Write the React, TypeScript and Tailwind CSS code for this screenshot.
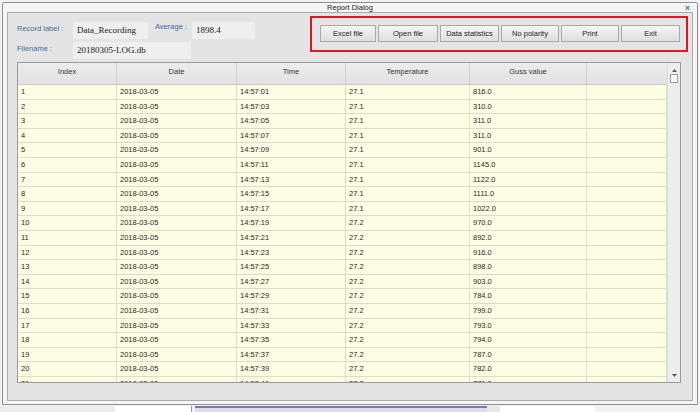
import React from 'react';

const GUSS = [
  '816.0', '310.0', '311.0', '311.0', '901.0', '1145.0', '1122.0', '1111.0', '1022.0', '970.0', '892.0',
  '916.0', '898.0', '903.0', '784.0', '799.0', '793.0', '794.0', '787.0', '782.0', '771.0',
];

const ROWS = GUSS.map((g, i) => {
  const sec = String(1 + i * 2).padStart(2, '0');
  return {
    index: String(i + 1),
    date: '2018-03-05',
    time: `14:57:${sec}`,
    temp: i < 9 ? '27.1' : '27.2',
    guss: g,
  };
});

const COLS = 'grid grid-cols-[99px_120px_109px_124px_117px_1fr]';

const BUTTONS = [
  { label: 'Excel file', w: 'w-[56px]' },
  { label: 'Open file', w: 'w-[60px]' },
  { label: 'Data statistics', w: 'w-[59px]' },
  { label: 'No polarity', w: 'w-[58px]' },
  { label: 'Print', w: 'w-[58px]' },
  { label: 'Exit', w: 'w-[59px]' },
];

function Field({ value, width }: { value: string; width: string }) {
  return (
    <div
      className={`${width} flex h-[17px] items-center bg-[#efefef] pl-[4px] font-['Liberation_Serif',serif] text-[9px] text-[#1a1a1a]`}
    >
      {value}
    </div>
  );
}

function Label({ text, width }: { text: string; width: string }) {
  return <div className={`${width} pt-[3px] text-[7.5px] leading-none text-[#3f6c9f]`}>{text}</div>;
}

function Scrollbar() {
  return (
    <div className="relative flex w-[13px] flex-col items-center border-l border-[#dcdcdc] bg-[#ededed]">
      <svg width="5" height="3" viewBox="0 0 5 3" className="mt-[6px]">
        <path d="M0 3 L2.5 0 L5 3 Z" fill="#555" />
      </svg>
      <div className="mt-[2px] h-[9px] w-[8px] border border-[#9c9c9c] bg-[#f7f7f7]" />
      <div className="flex-1" />
      <svg width="5" height="3" viewBox="0 0 5 3" className="mb-[5px]">
        <path d="M0 0 L2.5 3 L5 0 Z" fill="#555" />
      </svg>
    </div>
  );
}

function DataTable() {
  return (
    <div className="ml-[9px] mt-[3px] flex h-[321px] w-[664px] border border-[#9a9a9a] bg-[#e3e3e3]">
      <div className="flex flex-1 flex-col overflow-hidden">
        <div className={`${COLS} h-[22px] shrink-0 border-b border-[#c8c8c8] bg-gradient-to-b from-[#ececec] to-[#e2e2e2] text-[7.5px] text-[#333]`}>
          {['Index', 'Date', 'Time', 'Temperature', 'Guss value', ''].map((h, i) => (
            <div key={i} className="border-r border-[#d0d0d0] pt-[5px] text-center leading-none last:border-r-0">
              {h}
            </div>
          ))}
        </div>
        <div className="flex-1 overflow-hidden bg-[#fdfde3]">
          {ROWS.map((r) => (
            <div key={r.index} className={`${COLS} h-[14.6px] border-b border-[#dcdcc9] text-[7.5px] text-[#2a2a2a]`}>
              {[r.index, r.date, r.time, r.temp, r.guss, ''].map((c, i) => (
                <div key={i} className="flex items-center border-r border-[#dcdcc9] pl-[3px] leading-none">
                  {c}
                </div>
              ))}
            </div>
          ))}
        </div>
      </div>
      <Scrollbar />
    </div>
  );
}

export default function App() {
  return (
    <div className="flex h-[412px] w-[700px] flex-col overflow-hidden bg-[#f2f2f2] font-['Liberation_Sans',Arial,sans-serif]">
      <div className="mx-[2px] mt-[2px] flex h-[403px] flex-col rounded-t-[2px] border border-[#8e8e8e] bg-[#f5f5f5]">
        <div className="relative flex h-[9px] items-center justify-center text-[7.5px] leading-none text-[#222]">
          Report Dialog
          <span className="absolute right-[7px] top-[1px] text-[9px] font-bold leading-none text-[#2d7bd0]">×</span>
        </div>
        <div className="mx-[4px] mb-[3px] flex flex-1 flex-col border border-[#ababab] bg-[#e4e4e4]">
          <div className="flex items-start pr-[4px] pt-[3px]">
            <div className="flex flex-col gap-[3px] pl-[9px] pt-[6px]">
              <div className="flex items-start">
                <Label text="Record label :" width="w-[56px]" />
                <Field value="Data_Recording" width="w-[75px]" />
                <div className="ml-[7px] w-[37px] pt-[1px] text-[7.5px] leading-none text-[#3f6c9f]">Average :</div>
                <Field value="1898.4" width="w-[63px]" />
              </div>
              <div className="flex items-start">
                <Label text="Filename :" width="w-[56px]" />
                <Field value="20180305-LOG.db" width="w-[118px]" />
              </div>
            </div>
            <div className="ml-auto flex h-[36px] w-[378px] gap-[2px] border-2 border-[#e3141b] pl-[8px] pt-[7px]">
              {BUTTONS.map((b) => (
                <div
                  key={b.label}
                  className={`${b.w} flex h-[17px] items-center justify-center border border-[#a9a9a9] bg-gradient-to-b from-[#f6f6f6] to-[#dedede] text-[7.5px] leading-none text-[#222]`}
                >
                  {b.label}
                </div>
              ))}
            </div>
          </div>
          <DataTable />
        </div>
      </div>
      <div className="flex flex-1 items-stretch pt-[1px]">
        <div className="w-[115px] bg-[#ececec]" />
        <div className="w-[77px] border-r border-[#999] bg-white" />
        <div className="ml-[3px] w-[292px] border-t-2 border-[#7a78a8] bg-[#dcdcea]" />
        <div className="w-[13px] bg-[#e8e8e8]" />
        <div className="w-[95px] bg-white" />
      </div>
    </div>
  );
}
